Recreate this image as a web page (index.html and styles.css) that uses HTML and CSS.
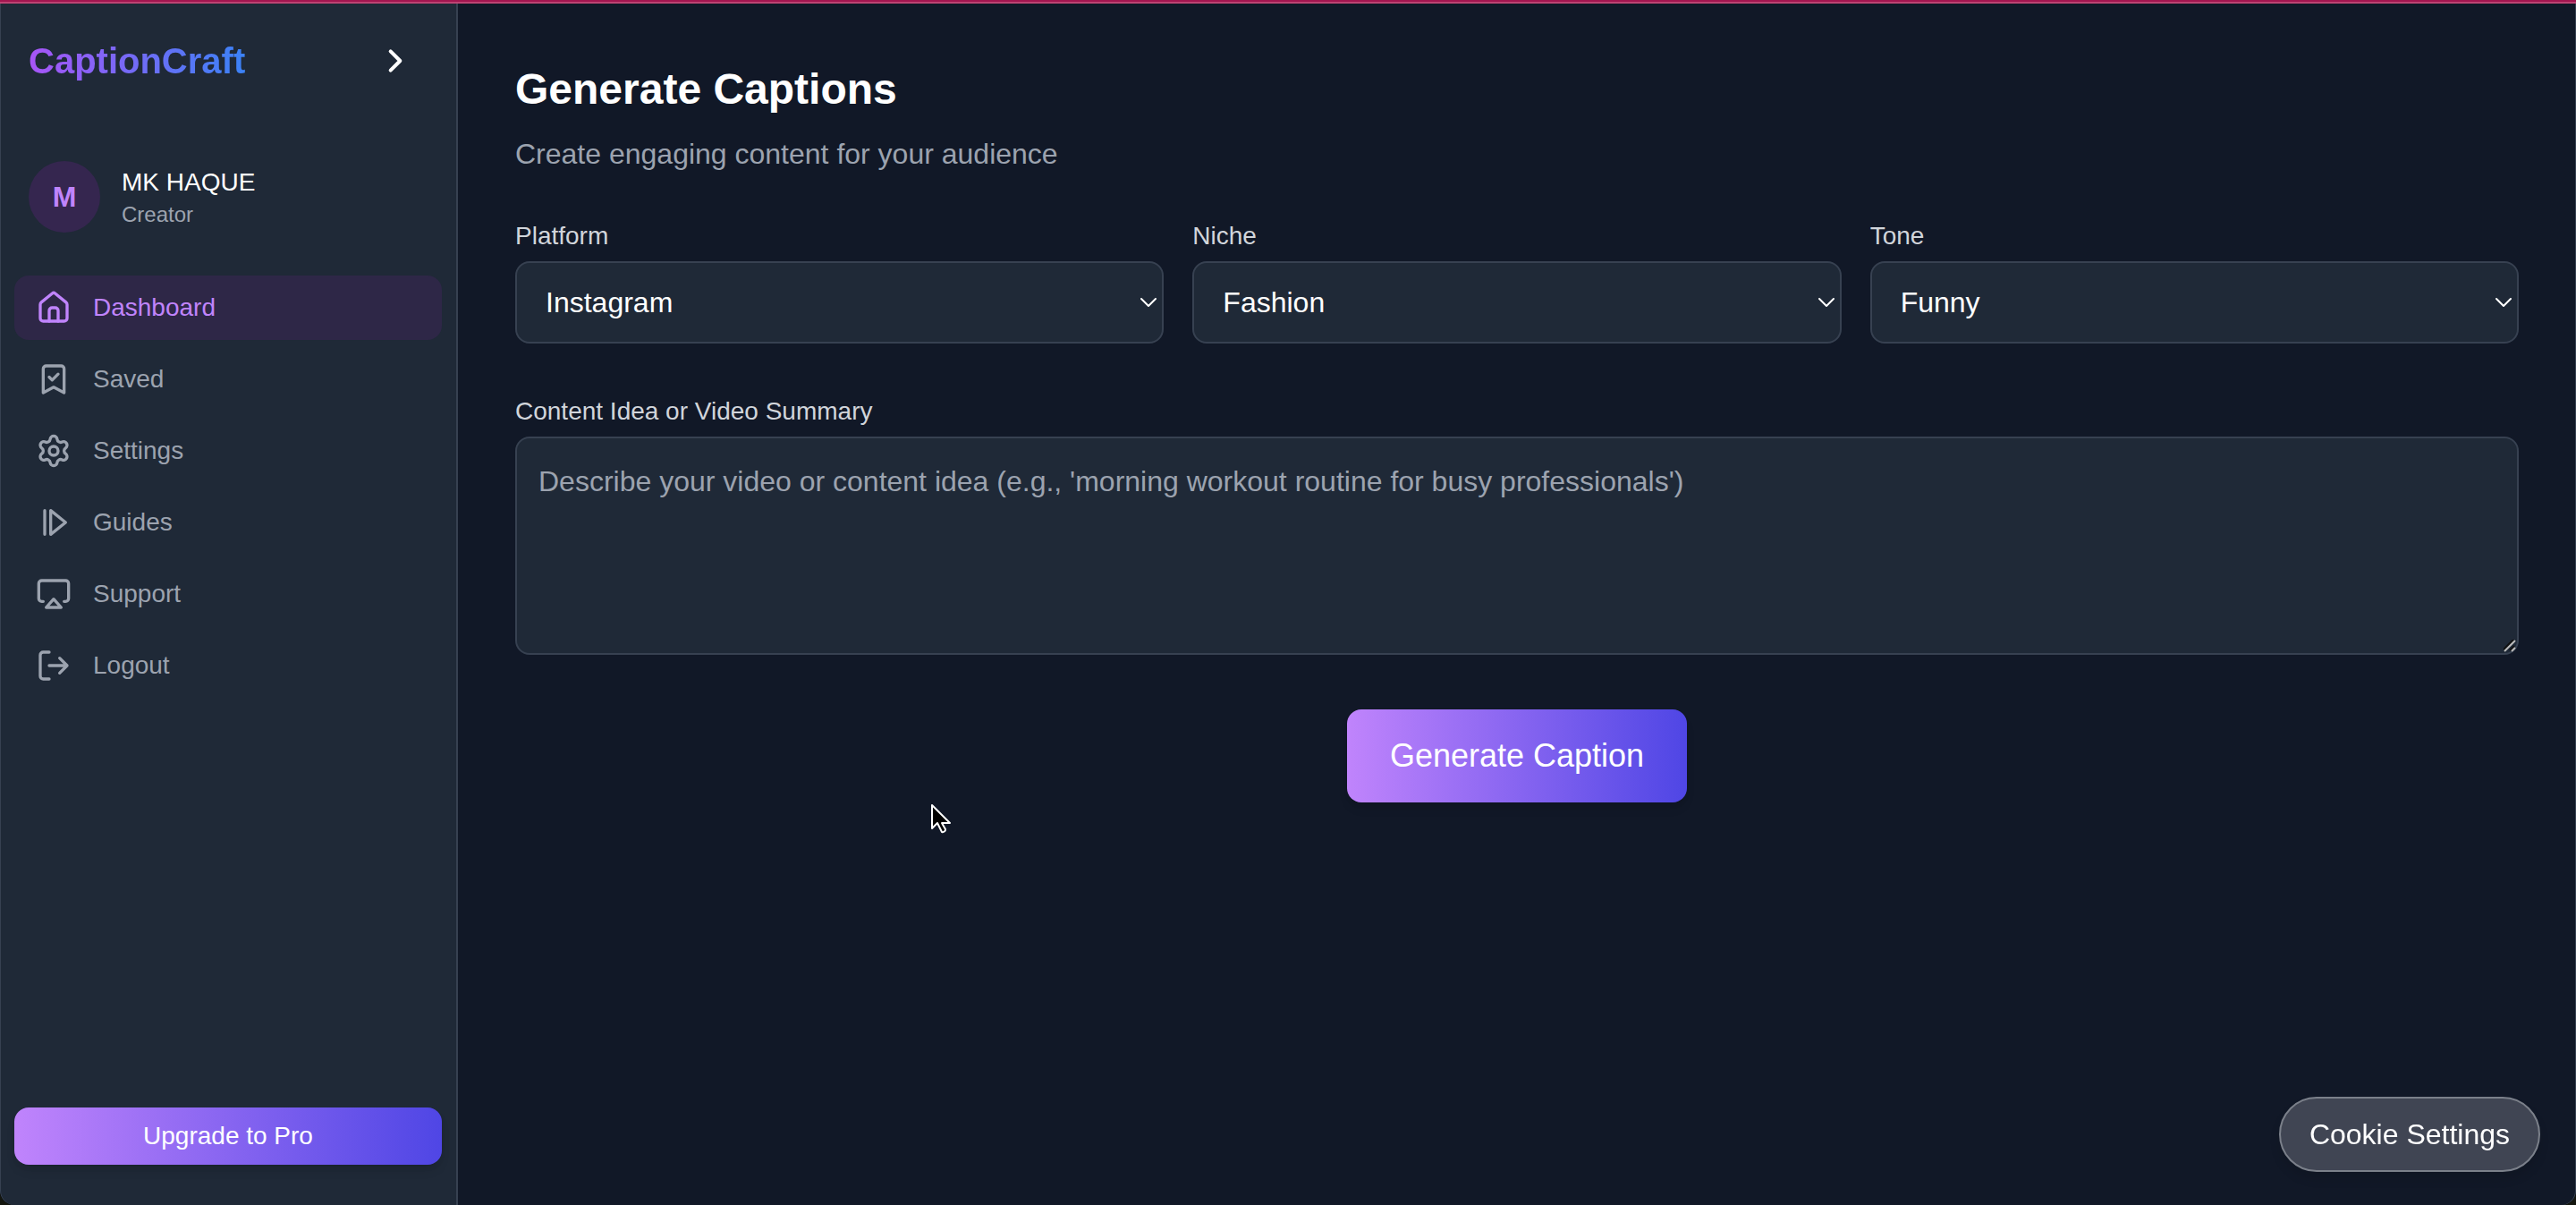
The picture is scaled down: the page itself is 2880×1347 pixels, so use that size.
FILE: index.html
```html
<!DOCTYPE html>
<html lang="en">
<head>
  <meta charset="utf-8">
  <meta name="viewport" content="width=device-width, initial-scale=1">
  <title>CaptionCraft</title>
  <link rel="stylesheet" href="styles.css">
</head>
<body>
  <div class="app">
    <aside class="sidebar">
      <header class="brand">
        <span class="brand-name">CaptionCraft</span>
        <button class="collapse" type="button" aria-label="Toggle sidebar">
          <svg class="collapse-icon" viewBox="0 0 24 24" aria-hidden="true"><path d="M8 4l8 8-8 8"/></svg>
        </button>
      </header>

      <div class="profile">
        <span class="avatar">M</span>
        <div>
          <div class="profile-name">MK HAQUE</div>
          <div class="profile-role">Creator</div>
        </div>
      </div>

      <nav class="nav">
        <a class="nav-item nav-item-active" href="#dashboard">
          <svg class="icon" viewBox="0 0 24 24" aria-hidden="true"><path d="M3 9.9a2 2 0 0 1 .75-1.56l7.3-5.95a1.5 1.5 0 0 1 1.9 0l7.3 5.95A2 2 0 0 1 21 9.9V19a2 2 0 0 1-2 2H5a2 2 0 0 1-2-2z"/><path d="M9 21v-7a2 2 0 0 1 2-2h2a2 2 0 0 1 2 2v7"/></svg>
          Dashboard
        </a>
        <a class="nav-item" href="#saved">
          <svg class="icon" viewBox="0 0 24 24" aria-hidden="true"><path d="M5 5a2 2 0 0 1 2-2h10a2 2 0 0 1 2 2v16l-7-3.7L5 21z"/><path d="M9 10.5l2 2 4-4"/></svg>
          Saved
        </a>
        <a class="nav-item" href="#settings">
          <svg class="icon" viewBox="0 0 24 24" aria-hidden="true"><path d="M9.671 4.136a2.34 2.34 0 0 1 4.659 0 2.34 2.34 0 0 0 3.319 1.915 2.34 2.34 0 0 1 2.33 4.033 2.34 2.34 0 0 0 0 3.831 2.34 2.34 0 0 1-2.33 4.033 2.34 2.34 0 0 0-3.319 1.915 2.34 2.34 0 0 1-4.659 0 2.34 2.34 0 0 0-3.32-1.915 2.34 2.34 0 0 1-2.33-4.033 2.34 2.34 0 0 0 0-3.831A2.34 2.34 0 0 1 6.35 6.051a2.34 2.34 0 0 0 3.319-1.915"/><circle cx="12" cy="12" r="3"/></svg>
          Settings
        </a>
        <a class="nav-item" href="#guides">
          <svg class="icon" viewBox="0 0 24 24" aria-hidden="true"><path d="M6 4v16M10 4v16l10-8z"/></svg>
          Guides
        </a>
        <a class="nav-item" href="#support">
          <svg class="icon" viewBox="0 0 24 24" aria-hidden="true"><path d="M5 17H4a2 2 0 0 1-2-2V5a2 2 0 0 1 2-2h16a2 2 0 0 1 2 2v10a2 2 0 0 1-2 2h-1"/><path d="M12 15.4l5 5.6H7z"/></svg>
          Support
        </a>
        <a class="nav-item" href="#logout">
          <svg class="icon" viewBox="0 0 24 24" aria-hidden="true"><path d="M9 3H5a2 2 0 0 0-2 2v14a2 2 0 0 0 2 2h4M9 12h12M16 7l5 5-5 5"/></svg>
          Logout
        </a>
      </nav>

      <button class="upgrade" type="button">Upgrade to Pro</button>
    </aside>

    <main class="main">
      <h1 class="title">Generate Captions</h1>
      <p class="subtitle">Create engaging content for your audience</p>

      <form class="form">
        <div class="options">
          <div class="field">
            <label class="label" for="platform">Platform</label>
            <select class="control select" id="platform"><option>Instagram</option></select>
          </div>
          <div class="field">
            <label class="label" for="niche">Niche</label>
            <select class="control select" id="niche"><option>Fashion</option></select>
          </div>
          <div class="field">
            <label class="label" for="tone">Tone</label>
            <select class="control select" id="tone"><option>Funny</option></select>
          </div>
        </div>
        <div class="field">
          <label class="label" for="idea">Content Idea or Video Summary</label>
          <textarea class="control idea" id="idea" rows="4" placeholder="Describe your video or content idea (e.g., 'morning workout routine for busy professionals')"></textarea>
        </div>
        <button class="generate" type="button">Generate Caption</button>
      </form>
    </main>
  </div>

  <button class="cookies" type="button">Cookie Settings</button>

  <svg class="pointer" viewBox="0 0 24 36" aria-hidden="true"><path d="M2 2v26l6-6 5 10a3 3 0 0 0 4-3l-4-7h9z"/></svg>
</body>
</html>
```

FILE: styles.css
```css
* {
  box-sizing: border-box;
}

html {
  background: #14160f;
}

body {
  margin: 0;
  color: #fff;
  font-family: "Liberation Sans", Arial, sans-serif;
  font-size: 28px;
  line-height: 40px;
}

button,
select,
textarea {
  font: inherit;
  color: inherit;
}

button {
  border: 0;
  cursor: pointer;
}

.app {
  display: flex;
  min-height: 100vh;
  overflow: hidden;
  background: #111827;
  border-radius: 0 0 16px 16px;
  box-shadow: inset -1px 0 #374151;
}

/* Accent strip along the top edge of the window */
.app::before {
  content: "";
  position: absolute;
  inset: 0 0 auto;
  height: 4px;
  background: linear-gradient(#a3154f 50%, #bd4473 50%);
}

/* Sidebar */

.sidebar {
  display: flex;
  flex: none;
  flex-direction: column;
  width: 512px;
  padding: 36px 16px 45px;
  background: #1f2937;
  border-right: 2px solid #374151;
  border-bottom-left-radius: 16px;
  box-shadow: inset 1px 0 #374151;
}

.brand {
  display: flex;
  align-items: center;
  justify-content: space-between;
  height: 64px;
  padding: 0 16px;
}

.brand-name {
  color: transparent;
  background: linear-gradient(90deg, #a855f7, #3b82f6);
  background-clip: text;
  -webkit-background-clip: text;
  font-size: 40px;
  font-weight: 700;
  line-height: 56px;
}

.collapse {
  display: flex;
  padding: 16px 20px;
  background: none;
}

.collapse-icon,
.icon {
  flex: none;
  fill: none;
  stroke: currentColor;
  stroke-width: 2;
  stroke-linecap: round;
  stroke-linejoin: round;
}

.collapse-icon {
  width: 32px;
  height: 32px;
  stroke-width: 3;
}

.icon {
  width: 40px;
  height: 40px;
}

.profile {
  display: flex;
  align-items: center;
  gap: 24px;
  margin: 80px 16px 48px;
}

.avatar {
  display: grid;
  place-items: center;
  width: 80px;
  height: 80px;
  border-radius: 50%;
  background: #35264f;
  color: #c084fc;
  font-size: 32px;
  font-weight: 700;
}

.profile-role {
  color: #9ca3af;
  font-size: 24px;
  line-height: 32px;
}

.nav {
  display: grid;
  gap: 8px;
}

.nav-item {
  display: flex;
  align-items: center;
  gap: 24px;
  height: 72px;
  padding: 0 24px;
  border-radius: 16px;
  color: #9ca3af;
  text-decoration: none;
}

.nav-item-active {
  background: #2e2747;
  color: #c084fc;
}

.upgrade,
.generate {
  border-radius: 16px;
  background: linear-gradient(90deg, #c084fc, #4f46e5);
  box-shadow: 0 8px 12px -2px rgb(0 0 0 / 10%), 0 4px 8px -4px rgb(0 0 0 / 10%);
}

.upgrade {
  height: 64px;
  margin-top: auto;
}

/* Main panel */

.main {
  flex: 1;
  min-width: 0;
  padding: 68px 64px;
}

.title {
  margin: 0 0 16px;
  font-size: 48px;
  line-height: 64px;
}

.subtitle {
  margin: 0 0 48px;
  color: #9ca3af;
  font-size: 32px;
  line-height: 48px;
}

.form {
  display: grid;
  gap: 56px;
}

.options {
  display: grid;
  grid-template-columns: repeat(3, 1fr);
  gap: 32px;
}

.field {
  display: grid;
  gap: 8px;
}

.label {
  color: #d1d5db;
}

.control {
  width: 100%;
  border: 2px solid #374151;
  border-radius: 16px;
  background-color: #1f2937;
  font-size: 32px;
  line-height: 48px;
}

.select {
  height: 92px;
  padding: 0 48px 0 32px;
  appearance: none;
  background-image: url("data:image/svg+xml,%3Csvg xmlns='http://www.w3.org/2000/svg' width='18' height='12' fill='none' stroke='white' stroke-width='2' stroke-linecap='round' stroke-linejoin='round'%3E%3Cpath d='M1 2l8 8 8-8'/%3E%3C/svg%3E");
  background-repeat: no-repeat;
  background-position: right 6px center;
}

.idea {
  display: block;
  padding: 24px;
  resize: vertical;
}

.idea::placeholder {
  color: #9ca3af;
}

.idea::-webkit-resizer {
  background: url("data:image/svg+xml,%3Csvg xmlns='http://www.w3.org/2000/svg' width='15' height='15' stroke-width='2'%3E%3Cpath stroke='%23111' d='M-1 12L12-1M7 12l5-5'/%3E%3Cpath stroke='%23bbb' d='M1 13L13 1M9 13l4-4'/%3E%3C/svg%3E") no-repeat right bottom;
}

.generate {
  justify-self: center;
  margin-top: 5px;
  padding: 24px 48px;
  font-size: 36px;
  line-height: 56px;
}

/* Floating items */

.cookies {
  position: fixed;
  right: 40px;
  bottom: 37px;
  padding: 16px 32px;
  border: 2px solid #7b808a;
  border-radius: 42px;
  background: #404553;
  box-shadow: 0 8px 12px rgb(0 0 0 / 10%);
  font-size: 32px;
  line-height: 48px;
}

.pointer {
  position: absolute;
  left: 1040px;
  top: 898px;
  width: 24px;
  height: 36px;
  fill: #000;
  stroke: #fff;
  stroke-width: 2;
  stroke-linejoin: round;
  pointer-events: none;
}
```
